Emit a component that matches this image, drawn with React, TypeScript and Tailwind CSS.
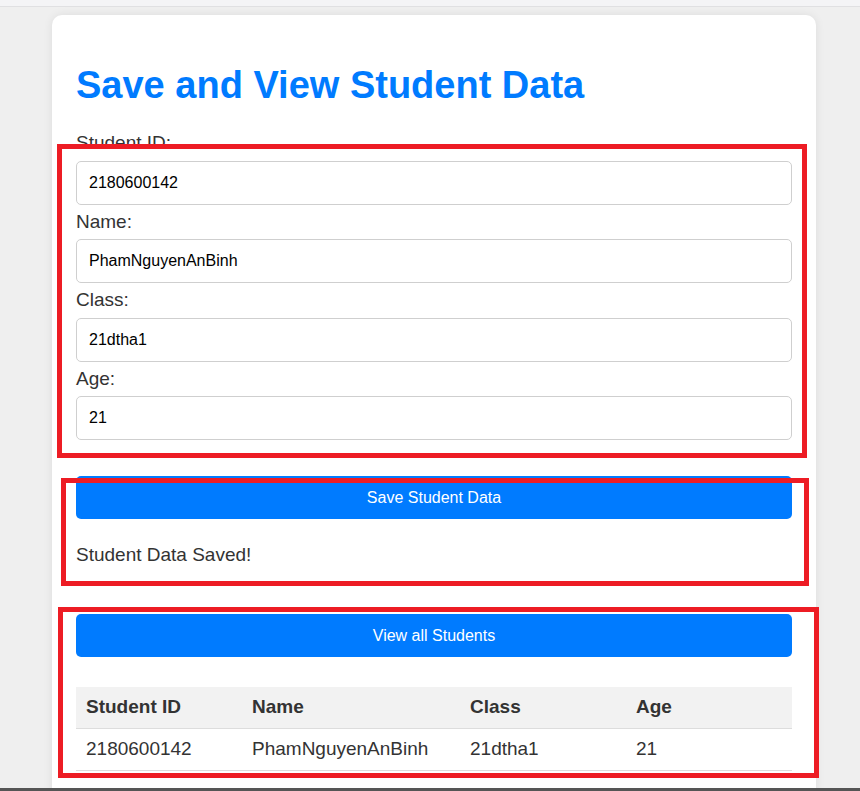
import React from 'react'

// ─── Data ─────────────────────────────────────────────────────────────────────

const FIELDS = [
  { label: 'Student ID:', value: '2180600142' },
  { label: 'Name:', value: 'PhamNguyenAnBinh' },
  { label: 'Class:', value: '21dtha1' },
  { label: 'Age:', value: '21' },
]

const STUDENTS = [
  { id: '2180600142', name: 'PhamNguyenAnBinh', cls: '21dtha1', age: '21' },
]

const FONT = { fontFamily: '"Liberation Sans", Arial, sans-serif' }

// ─── Page ─────────────────────────────────────────────────────────────────────

export default function App() {
  return (
    <div className="relative flex h-[791px] w-[860px] flex-col overflow-hidden bg-[#efefef]" style={FONT}>
      {/* ── browser strip ── */}
      <div className="h-[7px] shrink-0 border-b border-[#e0e0e2] bg-[#f4f4f6]" />

      <div className="flex-1 overflow-hidden">
        <div className="ml-[52px] mt-[8px] w-[764px] rounded-[10px] bg-white px-[24px] pb-10 pt-[51px] shadow-[0_0_10px_rgba(0,0,0,0.08)]">
          <h1 className="h-[38px] text-[38px] font-bold leading-[38px] text-[#007bff]">
            Save and View Student Data
          </h1>

          {/* ── Form ── */}
          <div className="mt-[28px]">
            {FIELDS.map(f => (
              <div key={f.label}>
                <label className="mb-[6.5px] mt-[6px] block h-[22px] text-[19px] leading-[22px] text-[#333]">
                  {f.label}
                </label>
                <input
                  readOnly
                  value={f.value}
                  className="block h-[44px] w-full rounded-[5px] border border-[#cfcfcf] bg-white px-[12px] text-[16px] text-black outline-none"
                  style={FONT}
                />
              </div>
            ))}
          </div>

          <button
            className="mt-[36px] block h-[43px] w-full rounded-[5px] bg-[#007bff] text-[16px] text-white"
            style={FONT}
          >
            Save Student Data
          </button>

          <p className="mt-[25px] h-[22px] text-[19px] leading-[22px] text-[#333]">Student Data Saved!</p>

          <button
            className="mt-[48px] block h-[43px] w-full rounded-[5px] bg-[#007bff] text-[16px] text-white"
            style={FONT}
          >
            View all Students
          </button>

          {/* ── Table ── */}
          <table className="mt-[30px] w-full table-fixed border-collapse text-[19px] text-[#333]">
            <colgroup>
              <col className="w-[166px]" />
              <col className="w-[218px]" />
              <col className="w-[166px]" />
              <col className="w-[166px]" />
            </colgroup>
            <thead>
              <tr className="h-[41px] border-b border-[#dddddd] bg-[#f2f2f2]">
                <th className="px-[10px] text-left font-bold">Student ID</th>
                <th className="px-[10px] text-left font-bold">Name</th>
                <th className="px-[10px] text-left font-bold">Class</th>
                <th className="px-[10px] text-left font-bold">Age</th>
              </tr>
            </thead>
            <tbody>
              {STUDENTS.map(s => (
                <tr key={s.id} className="h-[42px] border-b border-[#dddddd]">
                  <td className="px-[10px]">{s.id}</td>
                  <td className="px-[10px]">{s.name}</td>
                  <td className="px-[10px]">{s.cls}</td>
                  <td className="px-[10px]">{s.age}</td>
                </tr>
              ))}
            </tbody>
          </table>
        </div>
      </div>

      <div className="h-[3px] shrink-0 bg-[#555555]" />

      {/* ── annotation boxes ── */}
      <div className="pointer-events-none absolute left-[57px] top-[144px] h-[314px] w-[750px] border-[5px] border-[#ed1c24]" />
      <div className="pointer-events-none absolute left-[61px] top-[478px] h-[108px] w-[748px] border-[5px] border-[#ed1c24]" />
      <div className="pointer-events-none absolute left-[58px] top-[607px] h-[171px] w-[761px] border-[5px] border-[#ed1c24]" />
    </div>
  )
}
